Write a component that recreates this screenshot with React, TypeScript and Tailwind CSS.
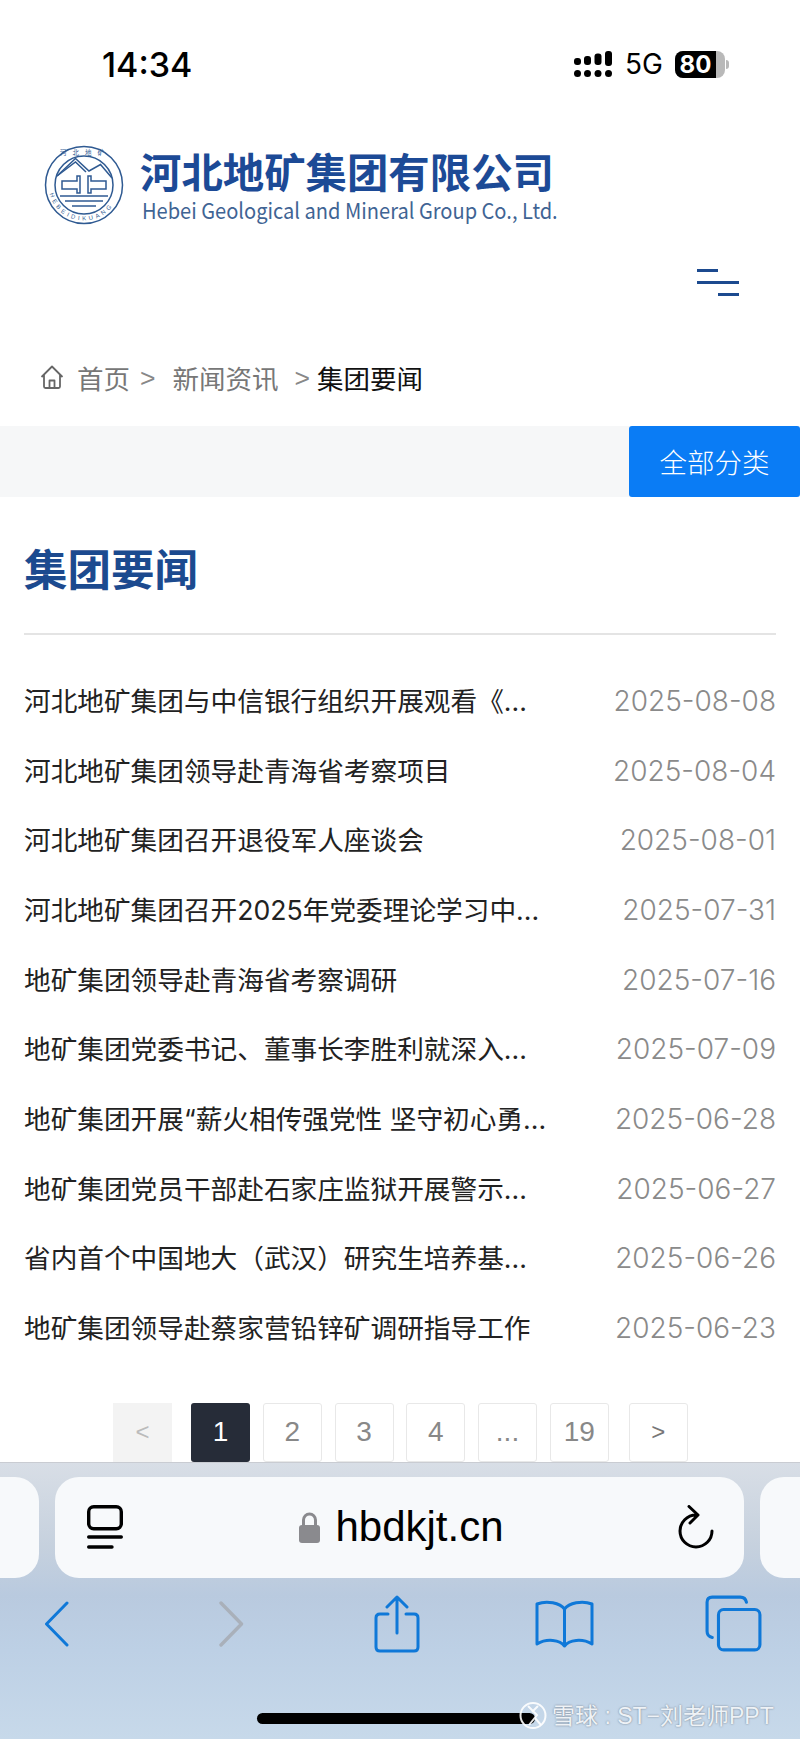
const news = [
  ['河北地矿集团与中信银行组织开展观看《...', '2025-08-08'],
  ['河北地矿集团领导赴青海省考察项目', '2025-08-04'],
  ['河北地矿集团召开退役军人座谈会', '2025-08-01'],
  ['河北地矿集团召开2025年党委理论学习中...', '2025-07-31'],
  ['地矿集团领导赴青海省考察调研', '2025-07-16'],
  ['地矿集团党委书记、董事长李胜利就深入...', '2025-07-09'],
  ['地矿集团开展“薪火相传强党性 坚守初心勇...', '2025-06-28'],
  ['地矿集团党员干部赴石家庄监狱开展警示...', '2025-06-27'],
  ['省内首个中国地大（武汉）研究生培养基...', '2025-06-26'],
  ['地矿集团领导赴蔡家营铅锌矿调研指导工作', '2025-06-23'],
];

const pages = ['2', '3', '4', '...', '19'];

function Seal() {
  return (
    <svg width="80" height="82" viewBox="0 0 80 82" fill="none" stroke="#2f5a92" strokeWidth="1.5" className="shrink-0">
      <circle cx="40" cy="41" r="38.5" />
      <circle cx="40" cy="41" r="29" />
      <path d="M13 32 L31.5 14.5 L45 27 L56.5 20.5 L68 34" />
      <path d="M13 32 L31.5 18 L42 28" />
      <path d="M18 37 H33 V32 H36 V49 H33 V45 H18 Z M62 37 H47 V32 H44 V49 H47 V45 H62 Z" />
      <path d="M16 52 H64 M21 57 H59 M28 62 H52" />
      <path id="sealArc" d="M4.5 41 A35.5 35.5 0 0 0 75.5 41" stroke="none" />
      <text fontSize="6" fill="#2f5a92" stroke="none" letterSpacing="3" fontFamily="Liberation Sans">
        <textPath href="#sealArc" startOffset="8%">HEBEIDIKUANG</textPath>
      </text>
      <text x="41" y="10.5" fontSize="6.5" fill="#2f5a92" stroke="none" textAnchor="middle" letterSpacing="6" fontFamily="Noto Sans CJK SC">河北地矿</text>
    </svg>
  );
}

function Signal() {
  return (
    <svg width="38" height="27" viewBox="0 0 38 27" fill="#000">
      <rect x="0" y="7" width="7" height="7" rx="3" />
      <rect x="10" y="5" width="7" height="9" rx="3" />
      <rect x="20.5" y="2.5" width="7" height="11.5" rx="3" />
      <rect x="31" y="0" width="7" height="15" rx="3" />
      <circle cx="3.5" cy="22.5" r="3.5" />
      <circle cx="13.5" cy="22.5" r="3.5" />
      <circle cx="24" cy="22.5" r="3.5" />
      <circle cx="34.5" cy="22.5" r="3.5" />
    </svg>
  );
}

function Blue({ w, h, view, children }: { w: number; h: number; view: string; children: React.ReactNode }) {
  return (
    <svg width={w} height={h} viewBox={view} fill="none" stroke="#0f78d8" strokeWidth="3" strokeLinecap="round" strokeLinejoin="round">
      {children}
    </svg>
  );
}

export default function App() {
  return (
    <div className='w-[800px] h-[1739px] overflow-hidden bg-white flex flex-col font-["Liberation_Sans","Noto_Sans_CJK_SC",sans-serif]'>
      {/* status bar */}
      <div className="h-[128px] shrink-0 flex items-start justify-between pt-[47px] pl-[102px] pr-[71px]">
        <span className='font-["Inter"] text-[34px] leading-[36px] font-medium text-black'>14:34</span>
        <div className="flex items-center pt-[4px]">
          <Signal />
          <span className='ml-[13px] font-["Inter"] text-[28px] leading-[27px] text-black'>5G</span>
          <div className="ml-[12px] w-[50px] h-[27px] rounded-[8px] overflow-hidden bg-[#b9b9b9] flex">
            <div className='w-[41px] bg-black text-white font-["Inter"] font-bold text-[24px] leading-[27px] text-center'>80</div>
          </div>
          <div className="ml-[1px] w-[3px] h-[9px] rounded-r-full bg-[#b9b9b9]" />
        </div>
      </div>

      {/* logo */}
      <div className="h-[116px] shrink-0 flex items-start pl-[44px] pt-[16px]">
        <Seal />
        <div className="ml-[16px] pt-[3px]">
          <div className='text-[41.4px] leading-[46px] font-bold text-[#1c4a96] font-["Noto_Sans_CJK_SC"] whitespace-nowrap'>河北地矿集团有限公司</div>
          <div className='ml-[2px] mt-[3px] origin-left scale-x-[0.912] text-[22px] leading-[26px] text-[#3f6494] font-["Noto_Sans_CJK_SC"] whitespace-nowrap'>Hebei Geological and Mineral Group Co., Ltd.</div>
        </div>
      </div>

      {/* menu */}
      <div className="h-[106px] shrink-0 flex flex-col items-end pr-[61px] pt-[25px] gap-[9px]">
        <div className="w-[42px] h-[3px] flex justify-start"><div className="w-[21px] h-[3px] bg-[#1c4a8f]" /></div>
        <div className="w-[42px] h-[3px] bg-[#1c4a8f]" />
        <div className="w-[42px] h-[3px] flex justify-end"><div className="w-[21px] h-[3px] bg-[#1c4a8f]" /></div>
      </div>

      {/* breadcrumb */}
      <div className='h-[76px] shrink-0 flex items-start pt-[10px] pl-[40px] text-[26.5px] leading-[36px] text-[#777] font-["Noto_Sans_CJK_SC"] whitespace-nowrap'>
        <svg width="24" height="24" viewBox="0 0 24 24" fill="none" stroke="#666" strokeWidth="1.8" strokeLinejoin="round" className="mt-[5px] mr-[13px]">
          <path d="M1.5 12 L12 1.5 L22.5 12 M4 10 V21.5 Q4 23 5.5 23 H18.5 Q20 23 20 21.5 V10 M9.5 23 V15.5 H14.5 V23" />
        </svg>
        <span>首页</span>
        <span className='ml-[10px] font-["Liberation_Sans"] text-[#888]'>&gt;</span>
        <span className="ml-[17px]">新闻资讯</span>
        <span className='ml-[16px] font-["Liberation_Sans"] text-[#888]'>&gt;</span>
        <span className="ml-[7px] text-[#111]">集团要闻</span>
      </div>

      {/* category band */}
      <div className="h-[71px] shrink-0 bg-[#f6f7f8] flex justify-end">
        <div className='w-[171px] rounded-[3px] bg-[#0a7cf5] text-white flex items-center justify-center text-[27.5px] font-["Noto_Sans_CJK_SC"] font-light'>全部分类</div>
      </div>

      {/* heading */}
      <div className="mx-[24px] h-[138px] shrink-0 border-b-2 border-[#e4e4e4]">
        <h1 className='pt-[40px] text-[43.5px] leading-[62px] font-bold text-[#1c4a8f] font-["Noto_Sans_CJK_SC"]'>集团要闻</h1>
      </div>

      {/* news list */}
      <div className="mx-[24px] mt-[31px] shrink-0">
        {news.map(([title, date]) => (
          <div key={date} className="h-[69.7px] flex items-center justify-between whitespace-nowrap">
            <span className='text-[26.67px] text-[#222] font-["Inter","Noto_Sans_CJK_SC",sans-serif]'>{title}</span>
            <span className='font-["Inter"] font-light text-[28px] text-[#8a8a8a]'>{date}</span>
          </div>
        ))}
      </div>

      {/* pagination */}
      <div className="mt-[40px] h-[59px] shrink-0 flex items-start pl-[113px] overflow-hidden">
        <div className="w-[59px] h-[59px] bg-[#f3f3f3] text-[#bbb] text-[24px] flex items-center justify-center">&lt;</div>
        <div className="ml-[19px] w-[59px] h-[59px] rounded-[3px] bg-[#262c38] text-white text-[28px] flex items-center justify-center">1</div>
        {pages.map((p) => (
          <div key={p} className="ml-[12.75px] w-[59px] h-[59px] rounded-[3px] border border-[#e8e8e8] text-[#888] text-[28px] flex items-center justify-center">{p}</div>
        ))}
        <div className="ml-[20px] w-[59px] h-[59px] rounded-[3px] border border-[#e8e8e8] text-[#777] text-[24px] flex items-center justify-center">&gt;</div>
      </div>

      {/* safari bottom bar */}
      <div className="relative flex-1 border-t border-[#c9ccd2] bg-[linear-gradient(180deg,#d8dee6_0%,#c6d1de_30%,#b9cadf_48%,#bdd0e5_68%,#c7d9ea_100%)]">
        <div className="mt-[14px] h-[101px] flex gap-[16px]">
          <div className="w-[39px] shrink-0 rounded-r-[24px] bg-[#f7f9fb]" />
          <div className="w-[689px] shrink-0 rounded-[24px] bg-[#f7f9fb] flex items-center relative pl-[32px] pr-[30px] justify-between">
            <svg width="36" height="44" viewBox="0 0 36 44" fill="none" stroke="#000" strokeWidth="3.4" strokeLinecap="round">
              <rect x="1.7" y="1.7" width="32.6" height="22" rx="5" />
              <path d="M1.7 32 H34.3 M1.7 42 H25" />
            </svg>
            <div className="ml-[2px] flex items-center">
              <svg width="21" height="31" viewBox="0 0 21 31" className="mr-[15px]">
                <path d="M4.5 14 V8 a6 6 0 0 1 12 0 V14" fill="none" stroke="#8a8a8e" strokeWidth="3" />
                <rect x="0" y="13" width="21" height="18" rx="3" fill="#8a8a8e" />
              </svg>
              <span className="text-[42px] leading-[48px] text-black">hbdkjt.cn</span>
            </div>
            <svg width="36" height="44" viewBox="0 0 36 44" fill="none" stroke="#000" strokeWidth="3" strokeLinecap="round" strokeLinejoin="round">
              <path d="M18 10 A16 16 0 1 0 34 26 M11 1.5 L20 10 L12 18" />
            </svg>
          </div>
          <div className="flex-1 rounded-l-[24px] bg-[#f7f9fb]" />
        </div>
        <div className="mt-[15px] h-[62px] relative flex items-center">
          <div className="w-[44px]" />
          <Blue w={25} h={46} view="0 0 25 46"><path d="M23 2 L2.5 23 L23 44" /></Blue>
          <svg width="25" height="46" viewBox="0 0 25 46" fill="none" stroke="#a9b0ba" strokeWidth="3.4" strokeLinecap="round" strokeLinejoin="round" className="ml-[150px]"><path d="M2 2 L22.5 23 L2 44" /></svg>
          <div className="ml-[130px]">
            <Blue w={46} h={58} view="0 0 46 58"><path d="M14 19 H6 Q2 19 2 23 V52 Q2 56 6 56 H40 Q44 56 44 52 V23 Q44 19 40 19 H32 M23 38 V2 M13 12 L23 2 L33 12" /></Blue>
          </div>
          <div className="ml-[115px]">
            <Blue w={59} h={48} view="0 0 59 48"><path d="M29.5 9 C25 3 12 0 2 4 V44 C12 38 25 40 29.5 46 C34 40 47 38 57 44 V4 C47 0 34 3 29.5 9 Z M29.5 9 V46" /></Blue>
          </div>
          <div className="ml-[111px]">
            <Blue w={57} h={57} view="0 0 55 55"><path d="M7 41 Q2 40 2 35 V7 Q2 2 7 2 H34 Q39 2 40 7" /><rect x="13" y="14" width="40" height="39" rx="5" /></Blue>
          </div>
        </div>
        <div className="absolute left-[257px] top-[250px] w-[278px] h-[11px] rounded-full bg-black" />
        {/* watermark */}
        <div className="absolute left-[519px] top-[238px] flex items-center gap-[5px] text-[#eef2f6] text-[23px] leading-[30px] whitespace-nowrap [text-shadow:0_0_2px_#6b7684]">
          <svg width="28" height="29" viewBox="0 0 28 29" fill="none" stroke="#fff" strokeOpacity="0.9" strokeWidth="2">
            <circle cx="14" cy="14.5" r="12.5" />
            <path d="M9 5 L18 14 L10 24 M19 5 L13 11 M16 17 L22 24" />
          </svg>
          <span>雪球 : ST−刘老师PPT</span>
        </div>
      </div>
    </div>
  );
}
